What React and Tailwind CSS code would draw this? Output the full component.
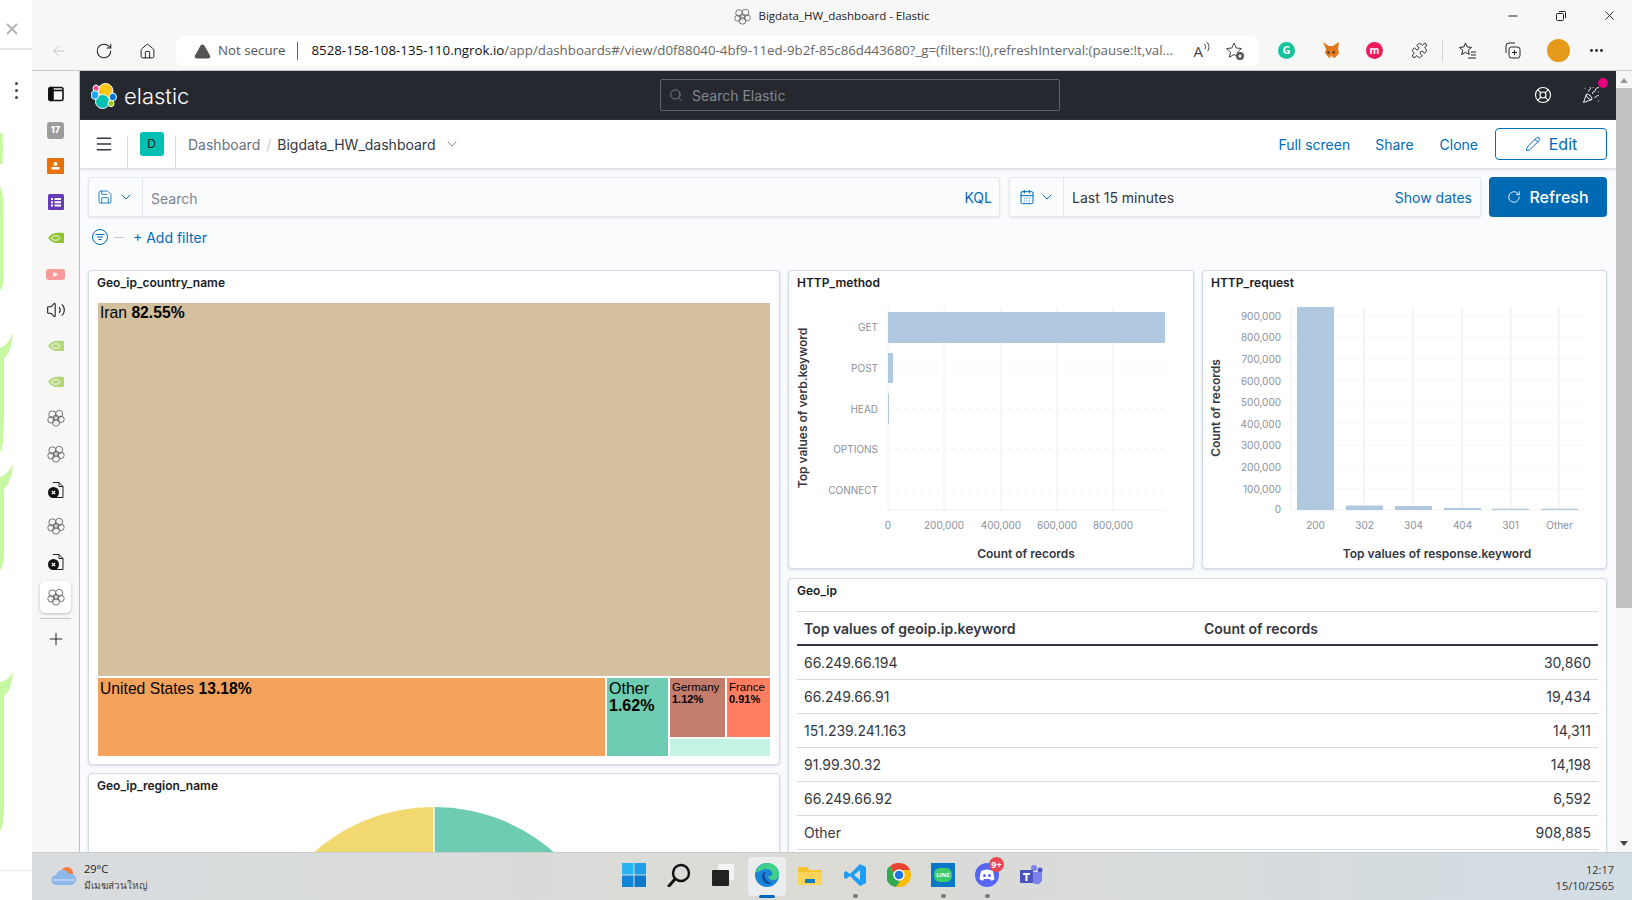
import React from "react";
import {
  ArrowLeft,
  RotateCw,
  House,
  TriangleAlert,
  Ellipsis,
  Search,
  LifeBuoy,
  PartyPopper,
  Menu,
  ChevronDown,
  Pencil,
  Save,
  CalendarDays,
  Volume2,
  Plus,
  X,
  Minus,
  Puzzle,
} from "lucide-react";

const inter = "font-['Inter',sans-serif]";
const chrome = "font-['Open_Sans','Noto_Sans',sans-serif]";

// outline of the elastic cluster, used for tab favicons
function ClusterIcon({ size = 18, stroke = "#666" }) {
  return (
    <svg width={size} height={size} viewBox="0 0 20 20" fill="none" stroke={stroke} strokeWidth="1">
      <circle cx="6" cy="6" r="4" />
      <circle cx="13.5" cy="5.5" r="4" />
      <circle cx="10" cy="10" r="3.2" />
      <circle cx="4.5" cy="12" r="3.6" />
      <circle cx="15.5" cy="11.5" r="3.6" />
      <circle cx="10" cy="15" r="4" />
    </svg>
  );
}

function ElasticLogo() {
  return (
    <svg width="26" height="26" viewBox="0 0 26 26">
      <circle cx="14.5" cy="8" r="7.5" fill="#FEC514" stroke="#fff" strokeWidth="1" />
      <circle cx="11.5" cy="18.5" r="7" fill="#00BFB3" stroke="#fff" strokeWidth="1" />
      <ellipse cx="5" cy="5.5" rx="3" ry="3.5" fill="#F04E98" stroke="#fff" strokeWidth="1" />
      <ellipse cx="4" cy="12" rx="3.8" ry="4.2" fill="#1BA9F5" stroke="#fff" strokeWidth="1" />
      <ellipse cx="21.8" cy="14" rx="3.6" ry="4" fill="#0077CC" stroke="#fff" strokeWidth="1" />
      <ellipse cx="20" cy="20.5" rx="3" ry="3.2" fill="#93C90E" stroke="#fff" strokeWidth="1" />
    </svg>
  );
}

function NvidiaIcon({ faded }) {
  return (
    <svg width="16" height="12" viewBox="0 0 16 12" className={faded ? "opacity-50" : "opacity-80"}>
      <path d="M0 6 C3 1 8 0 16 1 V11 H7 C4 10 2 8 0 6Z" fill="#76B900" />
      <path d="M3 6 C6 3 10 3 12 6 C10 9 6 9 3 6Z" fill="none" stroke="#fff" strokeWidth="1" />
    </svg>
  );
}

function FileXIcon() {
  return (
    <svg width="18" height="18" viewBox="0 0 18 18" fill="none">
      <path d="M6 1.500h6l4 4v11H6" stroke="#222" strokeWidth="1" />
      <path d="M12 1.500v4h4" stroke="#222" strokeWidth="1" />
      <circle cx="6.500" cy="11.500" r="5.500" fill="#111" />
      <path d="M4.800 9.800l3.400 3.400M8.200 9.800l-3.400 3.400" stroke="#fff" strokeWidth="1.200" />
    </svg>
  );
}

function LeftStrip() {
  return (
    <div className="relative flex h-full w-[32px] shrink-0 flex-col items-center bg-white">
      <X className="mt-[20px] ml-[3px] h-[18px] w-[18px] self-start text-[#b5b5b5]" strokeWidth={2.5} />
      <div className="mt-[10px] h-[2px] w-full bg-[#e5e5e5]" />
      <div className="mt-[32px] flex flex-col gap-[4px]">
        <div className="h-[3px] w-[3px] rounded-full bg-[#444]" />
        <div className="h-[3px] w-[3px] rounded-full bg-[#444]" />
        <div className="h-[3px] w-[3px] rounded-full bg-[#444]" />
      </div>
      <svg className="absolute left-0 top-0" width="32" height="900" viewBox="0 0 32 900" fill="#c8f8a2">
        <path d="M0 133h2.500c.5 10 .5 22 0 31H0Z" />
        <path d="M0 186c4 8 4 18 3.500 30v60c0 8-1 12-3.500 15Z" />
        <path d="M0 348c6-2 10-8 13-15-1 12-4 22-9 25v50c0 30-1 40-4 44Z" />
        <path d="M0 477c6-2 10-7 13-13-1 12-4 21-9 25v60c0 12-1 18-4 21Z" />
        <path d="M0 682c6-1 10-5 13-10-1 12-4 21-9 24v110c0 14-1 21-4 25Z" />
      </svg>
      <div className="absolute bottom-[29px] left-0 h-px w-full bg-[#e8e8e8]" />
    </div>
  );
}

function TitleBar() {
  return (
    <div className={`relative flex h-[32px] items-center justify-center bg-[#f7f7f7] text-[11.5px] text-[#222] ${chrome}`}>
      <div className="flex items-center gap-[7px]">
        <ClusterIcon size={17} />
        <span>Bigdata_HW_dashboard - Elastic</span>
      </div>
      <div className="absolute right-[15px] top-[8px] flex items-center gap-[35px]">
        <Minus className="h-[14px] w-[14px] text-[#222]" />
        <svg width="12" height="12" viewBox="0 0 12 12" fill="none" stroke="#222">
          <rect x="1.500" y="3.500" width="7" height="7" rx="1" />
          <path d="M4 1.500h5.500a1 1 0 0 1 1 1V8" />
        </svg>
        <X className="h-[15px] w-[15px] text-[#222]" strokeWidth={1.5} />
      </div>
    </div>
  );
}

function Toolbar() {
  return (
    <div className="flex h-[39px] items-start border-b border-[#c8c8c8] bg-[#f7f7f7] pt-[4px]">
      <div className="flex h-[30px] w-[144px] shrink-0 items-center">
        <ArrowLeft className="ml-[18px] h-[18px] w-[18px] text-[#c4c4c4]" strokeWidth={1.25} />
        <RotateCw className="ml-[27px] h-[18px] w-[18px] text-[#222]" strokeWidth={1.4} />
        <House className="ml-[26px] h-[17px] w-[17px] text-[#222]" strokeWidth={1.4} />
      </div>
      <div className={`flex h-[30px] w-[1083px] shrink-0 items-center rounded-lg bg-white text-[13.3px] ${chrome}`}>
        <TriangleAlert className="ml-[18px] h-[17px] w-[17px] fill-[#555] text-[#555]" />
        <span className="ml-[7px] text-[#555]">Not secure</span>
        <div className="ml-[12px] h-[18px] w-px bg-[#666]" />
        <span className="ml-[13px] w-[870px] shrink-0 whitespace-nowrap text-[#666]">
          <span className="text-[#111]">8528-158-108-135-110.ngrok.io</span>
          /app/dashboards#/view/d0f88040-4bf9-11ed-9b2f-85c86d443680?_g=(filters:!(),refreshInterval:(pause:!t,val...
        </span>
        <span className="ml-[12px] text-[15px] text-[#444]">A</span>
        <svg width="8" height="14" viewBox="0 0 8 14" fill="none" stroke="#444" className="mb-[6px]">
          <path d="M1 3c2 1 2 4 1 5M3.500 1c3 2 3 7 1 9" />
        </svg>
        <svg width="20" height="20" viewBox="0 0 20 20" fill="none" stroke="#444" className="ml-[14px]">
          <path d="M9 2l2.200 5 5.300.5-4 3.500 1.200 5.200L9 13.500 4.300 16.200 5.500 11l-4-3.500L6.800 7Z" />
          <circle cx="15" cy="15" r="4" fill="#555" stroke="none" />
          <path d="M13 15h4M15 13v4" stroke="#fff" />
        </svg>
      </div>
      <div className="relative h-[30px] flex-1">
        <div className={`absolute left-[19px] top-[6px] flex h-[17px] w-[17px] items-center justify-center rounded-full bg-[#15c39a] text-[11px] font-bold text-white ${chrome}`}>G</div>
        <svg className="absolute left-[63px] top-[5px]" width="18" height="18" viewBox="0 0 18 18">
          <path d="M1 1l6 4h4l6-4-1 7 1 4-4 5-3-1-3 1-4-5 1-4Z" fill="#e2761b" />
          <path d="M5 10l3 1-2 2ZM13 10l-3 1 2 2Z" fill="#233447" />
          <path d="M7 16l2-2 2 2Z" fill="#d7c1b3" />
        </svg>
        <div className={`absolute left-[107px] top-[6px] flex h-[17px] w-[17px] items-center justify-center rounded-full bg-[#ec1c5c] text-[10px] font-bold text-white ${chrome}`}>m</div>
        <Puzzle className="absolute left-[152px] top-[6px] h-[17px] w-[17px] text-[#222]" strokeWidth={1.3} />
        <div className="absolute left-[183px] top-[4px] h-[22px] w-px bg-[#d5d5d5]" />
        <svg className="absolute left-[199px] top-[5px]" width="19" height="19" viewBox="0 0 19 19" fill="none" stroke="#222">
          <path d="M7.500 2l1.800 4 4.200.4-3.200 2.900 1 4.200-3.800-2.200L3.700 13.500l1-4.200L1.500 6.400 5.700 6Z" />
          <path d="M13 11h5M13 14h5M10 17h8" />
        </svg>
        <svg className="absolute left-[244px] top-[5px]" width="19" height="19" viewBox="0 0 19 19" fill="none" stroke="#222">
          <rect x="6" y="6" width="11" height="11" rx="2.500" />
          <path d="M11.500 9v5M9 11.500h5" />
          <path d="M3 12V5a3 3 0 0 1 3-3h6" />
        </svg>
        <div className="absolute left-[288px] top-[3px] h-[23px] w-[23px] rounded-full bg-[#e59a1c]" />
        <Ellipsis className="absolute left-[329px] top-[6px] h-[17px] w-[17px] text-[#222]" />
      </div>
    </div>
  );
}

const sideIcons = [
  <svg key="a" width="18" height="18" viewBox="0 0 18 18" fill="none" stroke="#111" strokeWidth="1.600">
    <rect x="2" y="2.500" width="14" height="13" rx="2" />
    <path d="M2 5.500h14" />
    <rect x="2" y="2.500" width="4" height="13" rx="1.500" fill="#111" />
  </svg>,
  <div key="b" className={`flex h-[17px] w-[17px] items-center justify-center rounded-[3px] bg-[#9c9c9c] text-[9px] font-extrabold text-white ${inter}`}>17</div>,
  <svg key="c" width="17" height="16" viewBox="0 0 17 16">
    <rect width="17" height="16" rx="1" fill="#e8710a" />
    <circle cx="8.500" cy="6" r="2" fill="#fff" />
    <rect x="4.500" y="9" width="8" height="2.500" fill="#fff" />
  </svg>,
  <svg key="d" width="16" height="16" viewBox="0 0 16 16">
    <rect width="16" height="16" rx="1.500" fill="#673ab7" />
    <path d="M3 4h2v2H3ZM6.500 4H13v2H6.500ZM3 7.200h2v2H3ZM6.500 7.200H13v2H6.500ZM3 10.400h2v2H3ZM6.500 10.400H13v2H6.500Z" fill="#fff" />
  </svg>,
  <NvidiaIcon key="e" />,
  <svg key="f" width="19" height="11" viewBox="0 0 19 11">
    <rect width="19" height="11" rx="3" fill="#fb9a9a" />
    <path d="M7.500 3l4.500 2.500L7.500 8Z" fill="#fff" />
  </svg>,
  <Volume2 key="g" className="h-[20px] w-[20px] text-[#111]" strokeWidth={1.25} />,
  <NvidiaIcon key="h" faded />,
  <NvidiaIcon key="i" faded />,
  <ClusterIcon key="j" />,
  <ClusterIcon key="k" />,
  <FileXIcon key="l" />,
  <ClusterIcon key="m" />,
  <FileXIcon key="n" />,
];

function Sidebar() {
  return (
    <div className="flex w-[48px] shrink-0 flex-col items-center border-r border-[#bfbfbf] bg-[#f7f7f7] pt-[5px]">
      {sideIcons.map((icon, i) => (
        <div key={i} className="flex h-[36px] w-full shrink-0 items-center justify-center">
          {icon}
        </div>
      ))}
      <div className="mt-[1px] flex h-[32px] w-[31px] items-center justify-center rounded-[5px] bg-white shadow-[0_1px_3px_rgba(0,0,0,0.25)]">
        <ClusterIcon />
      </div>
      <div className="mt-[5px] h-px w-[31px] bg-[#c8c8c8]" />
      <Plus className="mt-[10px] h-[20px] w-[20px] text-[#111]" strokeWidth={1.1} />
    </div>
  );
}

function Panel({ title, className, children }) {
  return (
    <div className={`flex shrink-0 flex-col overflow-hidden rounded-[4px] border border-[#d3dae6] bg-white shadow-[0_1px_3px_rgba(152,162,179,0.35)] ${className}`}>
      <div className={`h-[28px] shrink-0 pl-[8px] pt-[3px] text-[12px] font-semibold leading-[18px] text-[#1a1c21] ${inter}`}>{title}</div>
      {children}
    </div>
  );
}

function Treemap() {
  const sans = "font-['Liberation_Sans',sans-serif] text-black";
  return (
    <div className={`mx-[9px] flex h-[453px] flex-col gap-[2px] ${sans}`}>
      <div className="h-[373px] bg-[#d4bf9f] pl-[2px] text-[15.7px] leading-[20px]">
        Iran <b>82.55%</b>
      </div>
      <div className="flex h-[78px] gap-[2px]">
        <div className="w-[507px] bg-[#f5a35c] pl-[2px] pt-[1px] text-[15.7px] leading-[20px]">
          United States <b>13.18%</b>
        </div>
        <div className="w-[61px] bg-[#6dccb1] pl-[2px] pt-[2px] text-[16px] leading-[17px]">
          Other
          <br />
          <b>1.62%</b>
        </div>
        <div className="flex flex-1 flex-col gap-[2px]">
          <div className="flex h-[59px] gap-[2px] text-[11.5px] leading-[12px]">
            <div className="w-[55px] bg-[#c47c6c] pl-[2px] pt-[3px]">
              Germany
              <br />
              <b className="text-[11px]">1.12%</b>
            </div>
            <div className="flex-1 bg-[#ff7e62] pl-[2px] pt-[3px]">
              France
              <br />
              <span className="text-[11px] font-bold">0.91%</span>
            </div>
          </div>
          <div className="flex-1 bg-[#c4f2e4]" />
        </div>
      </div>
    </div>
  );
}

const tick = "fill-[#8a919c] text-[10px]";
const axisTitle = "fill-[#343741] text-[12px] font-semibold";

function MethodChart() {
  const cats = [
    ["GET", 327],
    ["POST", 368],
    ["HEAD", 409],
    ["OPTIONS", 449],
    ["CONNECT", 490],
  ];
  return (
    <svg width="403" height="268" viewBox="789 299 403 268" className={inter}>
      {[888, 944, 1001, 1057, 1113].map((x) => (
        <line key={x} x1={x} x2={x} y1="307" y2="510" stroke="#eef0f3" strokeWidth="1" />
      ))}
      {cats.slice(1).map(([, y]) => (
        <line key={y} x1="888" x2="1165" y1={y} y2={y} stroke="#eef0f3" strokeWidth="1" strokeDasharray="4 4" />
      ))}
      <line x1="888" x2="1165" y1="510" y2="510" stroke="#eef0f3" strokeWidth="1" />
      <rect x="888" y="312" width="277" height="31" fill="#b0c9e0" />
      <rect x="888" y="353" width="5" height="30" fill="#b0c9e0" />
      <rect x="888" y="393" width="1" height="31" fill="#b0c9e0" />
      {cats.map(([t, y]) => (
        <text key={t} x="878" y={y + 4} textAnchor="end" className={tick}>{t}</text>
      ))}
      {[[888, "0"], [944, "200,000"], [1001, "400,000"], [1057, "600,000"], [1113, "800,000"]].map(([x, t]) => (
        <text key={t} x={x} y="529" textAnchor="middle" className={tick}>{t}</text>
      ))}
      <text x="1026" y="558" textAnchor="middle" className={axisTitle}>Count of records</text>
      <text transform="translate(807 408) rotate(-90)" textAnchor="middle" className={axisTitle}>Top values of verb.keyword</text>
    </svg>
  );
}

function RequestChart() {
  const bars = [
    ["200", 1297, 307],
    ["302", 1346, 505.5],
    ["304", 1395, 506],
    ["404", 1444, 508],
    ["301", 1492, 508.7],
    ["Other", 1541, 508.7],
  ];
  const rows = ["900,000", "800,000", "700,000", "600,000", "500,000", "400,000", "300,000", "200,000", "100,000"];
  return (
    <svg width="403" height="268" viewBox="1203 299 403 268" className={inter}>
      {rows.map((t, i) => (
        <line key={t} x1="1291" x2="1583" y1={315.7 + i * 21.6} y2={315.7 + i * 21.6} stroke="#eef0f3" strokeDasharray="4 4" />
      ))}
      {[1364, 1413, 1462, 1511, 1559].map((x) => (
        <line key={x} x1={x} x2={x} y1="307" y2="510" stroke="#eef0f3" strokeWidth="1.500" />
      ))}
      <line x1="1291" x2="1291" y1="307" y2="510" stroke="#eef0f3" />
      <line x1="1291" x2="1583" y1="510" y2="510" stroke="#eef0f3" />
      {bars.map(([t, x, y]) => (
        <rect key={t} x={x} y={y} width="37" height={510 - y} fill="#b0c9e0" />
      ))}
      {rows.map((t, i) => (
        <text key={t} x="1281" y={319.7 + i * 21.6} textAnchor="end" className={tick}>{t}</text>
      ))}
      <text x="1281" y="513" textAnchor="end" className={tick}>0</text>
      {bars.map(([t, x]) => (
        <text key={t} x={x + 18.5} y="529" textAnchor="middle" className={tick}>{t}</text>
      ))}
      <text x="1437" y="558" textAnchor="middle" className={axisTitle}>Top values of response.keyword</text>
      <text transform="translate(1220 408) rotate(-90)" textAnchor="middle" className={axisTitle}>Count of records</text>
    </svg>
  );
}

const ipRows = [
  ["66.249.66.194", "30,860"],
  ["66.249.66.91", "19,434"],
  ["151.239.241.163", "14,311"],
  ["91.99.30.32", "14,198"],
  ["66.249.66.92", "6,592"],
  ["Other", "908,885"],
];

function GeoTable() {
  return (
    <div className={`ml-[8px] mr-[8px] border-t border-[#d3dae6] text-[14px] ${inter}`}>
      <div className="flex h-[34px] items-center border-b-2 border-[#343741] text-[14px] font-semibold text-[#343741]">
        <div className="w-[407px] pl-[7px]">Top values of geoip.ip.keyword</div>
        <div>Count of records</div>
      </div>
      {ipRows.map(([ip, count]) => (
        <div key={ip} className="flex h-[34px] items-center justify-between border-b border-[#d3dae6] px-[7px] text-[#343741]">
          <span>{ip}</span>
          <span>{count}</span>
        </div>
      ))}
    </div>
  );
}

function Dashboard() {
  return (
    <div className="flex gap-[8px] pl-[8px] pt-[23px]">
      <div className="flex w-[692px] shrink-0 flex-col gap-[8px]">
        <Panel title="Geo_ip_country_name" className="h-[495px]">
          <div className="pt-[4px]">
            <Treemap />
          </div>
        </Panel>
        <Panel title="Geo_ip_region_name" className="h-[300px]">
          <svg width="690" height="270" viewBox="89 802 690 270" className="shrink-0">
            <path d="M434 989 L434 807 A182 182 0 0 0 252 989 Z" fill="#f1d86f" />
            <path d="M434 989 L434 807 A182 182 0 0 1 616 989 Z" fill="#6dccb1" />
            <line x1="434" x2="434" y1="807" y2="989" stroke="#fff" strokeWidth="1.500" />
          </svg>
        </Panel>
      </div>
      <div className="flex w-[819px] shrink-0 flex-col gap-[9px]">
        <div className="flex gap-[8px]">
          <Panel title="HTTP_method" className="h-[299px] w-[406px]">
            <MethodChart />
          </Panel>
          <Panel title="HTTP_request" className="h-[299px] w-[405px]">
            <RequestChart />
          </Panel>
        </div>
        <Panel title="Geo_ip" className="h-[300px]">
          <div className="pt-[4px]">
            <GeoTable />
          </div>
        </Panel>
      </div>
    </div>
  );
}

function KibanaPage() {
  const link = "text-[14px] text-[#006bb8]";
  return (
    <div className={`flex h-full min-w-0 flex-1 flex-col overflow-hidden bg-[#fafbfd] ${inter}`}>
      <div className="relative flex h-[49px] shrink-0 items-center bg-[#25282f]">
        <div className="ml-[11px]">
          <ElasticLogo />
        </div>
        <span className="ml-[7px] text-[22px] font-light leading-none text-white">elastic</span>
        <div className="absolute left-[580px] top-[8px] flex h-[32px] w-[400px] items-center rounded-[2px] border border-[#5f646d] text-[14px] text-[#83888f]">
          <Search className="ml-[8px] h-[14px] w-[14px]" strokeWidth={1.5} />
          <span className="ml-[9px]">Search Elastic</span>
        </div>
        <LifeBuoy className="absolute right-[64px] top-[15px] h-[18px] w-[18px] text-white" strokeWidth={1.5} />
        <PartyPopper className="absolute right-[16px] top-[15px] h-[18px] w-[18px] text-white" strokeWidth={1.25} />
        <div className="absolute right-[8px] top-[7px] h-[10px] w-[10px] rounded-full bg-[#e6007e]" />
      </div>
      <div className="relative z-10 flex h-[48px] shrink-0 items-center bg-white text-[14px] shadow-[0_1px_3px_rgba(152,162,179,0.5)]">
        <div className="flex h-[32px] w-[48px] items-center justify-center self-end border-r border-[#d3dae6] pb-[16px]">
          <Menu className="h-[20px] w-[20px] text-[#343741]" strokeWidth={1.75} />
        </div>
        <div className="flex h-[32px] w-[48px] justify-center self-end border-r border-[#d3dae6]">
          <div className="-mt-[4px] flex h-[24px] w-[24px] items-center justify-center rounded-[3px] bg-[#00bfb3] text-[12px] text-[#1a1c21]">D</div>
        </div>
        <span className="ml-[12px] text-[#69707d]">Dashboard</span>
        <span className="mx-[6px] text-[#c5cbd5]">/</span>
        <span className="text-[#343741]">Bigdata_HW_dashboard</span>
        <ChevronDown className="ml-[9px] h-[16px] w-[16px] text-[#69707d]" strokeWidth={1.25} />
        <div className="ml-auto flex items-center">
          <span className={link}>Full screen</span>
          <span className={`ml-[25px] ${link}`}>Share</span>
          <span className={`ml-[26px] ${link}`}>Clone</span>
          <div className="ml-[17px] mr-[9px] flex h-[32px] w-[112px] items-center justify-center gap-[8px] rounded-[4px] border border-[#0071c2] text-[16px] text-[#006bb8]">
            <Pencil className="h-[16px] w-[16px]" strokeWidth={1.5} />
            Edit
          </div>
        </div>
      </div>
      <div className="mt-[9px] flex h-[40px] shrink-0 gap-[9px] pl-[8px] text-[14px]">
        <div className="flex w-[912px] items-center rounded-[2px] border border-[#e4e8ef] bg-[#fbfcfd] shadow-[0_1px_2px_rgba(152,162,179,0.25)]">
          <div className="flex h-full w-[54px] items-center justify-center gap-[5px] border-r border-[#e4e8ef] text-[#006bb8]">
            <Save className="h-[16px] w-[16px]" strokeWidth={1.25} />
            <ChevronDown className="h-[16px] w-[16px]" strokeWidth={1.5} />
          </div>
          <span className="ml-[8px] pt-[2px] text-[#7b828e]">Search</span>
          <span className="ml-auto mr-[7px] text-[#006bb8]">KQL</span>
        </div>
        <div className="flex w-[472px] items-center rounded-[2px] border border-[#e4e8ef] bg-[#fbfcfd] shadow-[0_1px_2px_rgba(152,162,179,0.25)]">
          <div className="flex h-full w-[54px] items-center justify-center gap-[4px] border-r border-[#e4e8ef] text-[#006bb8]">
            <CalendarDays className="h-[16px] w-[16px]" strokeWidth={1.5} />
            <ChevronDown className="h-[16px] w-[16px]" strokeWidth={1.5} />
          </div>
          <span className="ml-[8px] text-[#343741]">Last 15 minutes</span>
          <span className="ml-auto mr-[8px] text-[#006bb8]">Show dates</span>
        </div>
        <div className="-ml-px flex w-[118px] items-center justify-center gap-[8px] rounded-[4px] bg-[#0069b3] text-[16px] font-medium text-white">
          <RotateCw className="h-[14px] w-[14px]" strokeWidth={1.5} />
          Refresh
        </div>
      </div>
      <div className="mt-[10px] flex h-[20px] shrink-0 items-center pl-[12px] text-[14px] text-[#006bb8]">
        <svg width="16" height="16" viewBox="0 0 16 16" fill="none" stroke="#006bb8">
          <circle cx="8" cy="8" r="7.500" />
          <path d="M3.500 5.500h9M5 8h6M6.500 10.500h3" />
        </svg>
        <div className="ml-[6px] h-px w-[10px] bg-[#c5cbd5]" />
        <span className="ml-[9px]">+ Add filter</span>
      </div>
      <Dashboard />
    </div>
  );
}

function Scrollbar() {
  return (
    <div className="flex h-full w-[16px] shrink-0 flex-col items-center bg-[#f6f6f6]">
      <div className="mt-[7px] h-0 w-0 border-x-[4px] border-b-[5px] border-x-transparent border-b-[#9b9b9b]" />
      <div className="mt-[5px] h-[520px] w-full bg-[#c1c1c1]" />
      <div className="mt-auto mb-[6px] h-0 w-0 border-x-[4px] border-t-[5px] border-x-transparent border-t-[#444]" />
    </div>
  );
}

function TaskIcon({ left, dot, children }) {
  return (
    <div className="absolute top-[9px] flex h-[26px] w-[26px] items-center justify-center" style={{ left }}>
      {children}
      {dot && <div className="absolute -bottom-[10px] h-[4px] w-[5px] rounded-full bg-[#7a7a7a]" />}
    </div>
  );
}

function Taskbar() {
  return (
    <div className={`relative h-[48px] shrink-0 border-t border-[#c9cbcc] bg-gradient-to-r from-[#d8dcdf] via-[#dcdbd6] to-[#d2dde4] text-[#222] ${chrome}`}>
      <svg className="absolute left-[19px] top-[12px]" width="26" height="22" viewBox="0 0 26 22">
        <circle cx="16" cy="8" r="6" fill="#f47b3c" />
        <path d="M6 20a5 5 0 0 1-1-10 7 7 0 0 1 13-1 5.500 5.500 0 0 1 3 11Z" fill="#8fb8ea" />
        <path d="M2 15h22" stroke="#d6e6fa" strokeWidth="1" />
      </svg>
      <div className="absolute left-[52px] top-[8px] text-[11px] leading-[16px]">
        29°C
        <div className="text-[10px] leading-[16px] text-[#444]">มีเมฆส่วนใหญ่</div>
      </div>
      <TaskIcon left="589px">
        <svg width="24" height="24" viewBox="0 0 24 24">
          <path d="M0 0h11.500v11.500H0Z" fill="#2bb4f2" />
          <path d="M12.500 0H24v11.500H12.500Z" fill="#1f9fe8" />
          <path d="M0 12.500h11.500V24H0Z" fill="#1186d8" />
          <path d="M12.500 12.500H24V24H12.500Z" fill="#0c78cc" />
        </svg>
      </TaskIcon>
      <TaskIcon left="634px">
        <svg width="24" height="24" viewBox="0 0 24 24" fill="none" stroke="#111" strokeWidth="2.400">
          <circle cx="14" cy="10" r="8" />
          <path d="M8 16l-6 7" strokeLinecap="round" strokeWidth="3" />
        </svg>
      </TaskIcon>
      <TaskIcon left="678px">
        <svg width="24" height="24" viewBox="0 0 24 24">
          <rect x="7" y="1" width="16" height="16" rx="1" fill="#f4f4f4" />
          <rect x="1" y="7" width="17" height="16" rx="1" fill="#222" />
        </svg>
      </TaskIcon>
      <div className="absolute left-[716px] top-[4px] h-[39px] w-[38px] rounded-[4px] bg-[#ecedee]" />
      <div className="absolute bottom-[2px] left-[727px] h-[3px] w-[16px] rounded-full bg-[#0067c0]" />
      <TaskIcon left="722px">
        <svg width="26" height="26" viewBox="0 0 26 26">
          <circle cx="13" cy="13" r="12" fill="#1b84d8" />
          <path d="M2 10C4 3 10 1 14 1c6 0 11 5 11 11 0 4-3 6-6 6s-5-2-5-4c3 1 5-1 4-4-2-3-6-4-10-2-3 1-5 3-6 2Z" fill="#3fd08a" />
          <path d="M8 14c0-3 2-4 4-4-3 3-1 10 6 11-6 3-10-2-10-7Z" fill="#0c4f9a" />
        </svg>
      </TaskIcon>
      <TaskIcon left="765px">
        <svg width="26" height="24" viewBox="0 0 26 24">
          <path d="M1 4h9l3 3h12v15H1Z" fill="#f7c331" />
          <rect x="1" y="9" width="24" height="13" fill="#fbd35b" />
          <rect x="8" y="16" width="10" height="4" fill="#0f7dc2" />
        </svg>
      </TaskIcon>
      <TaskIcon left="810px" dot>
        <svg width="24" height="24" viewBox="0 0 24 24">
          <path d="M17 1l6 3v16l-6 3L7 13l-4 3-2-1.500V9.500L3 8l4 3ZM17 7l-6 5 6 5Z" fill="#1f9cf0" />
        </svg>
      </TaskIcon>
      <TaskIcon left="854px">
        <svg width="24" height="24" viewBox="0 0 24 24">
          <circle cx="12" cy="12" r="12" fill="#fbbc04" />
          <path d="M12 0a12 12 0 0 1 11 7H12a5 5 0 0 0-5 3L3 3a12 12 0 0 1 9-3Z" fill="#ea4335" />
          <path d="M3 3l5 10 5 5-4 6A12 12 0 0 1 3 3Z" fill="#34a853" />
          <circle cx="12" cy="12" r="5" fill="#1a73e8" stroke="#fff" strokeWidth="1.500" />
        </svg>
      </TaskIcon>
      <TaskIcon left="898px" dot>
        <div className="flex h-[24px] w-[24px] items-center justify-center bg-[#0a78c8]">
          <div className="flex h-[14px] w-[18px] items-center justify-center rounded-[6px] bg-[#3ecb6a] text-[6px] font-bold text-white">LINE</div>
        </div>
      </TaskIcon>
      <TaskIcon left="942px" dot>
        <svg width="24" height="24" viewBox="0 0 24 24">
          <circle cx="12" cy="12" r="12" fill="#5865f2" />
          <path d="M6 8c4-2 8-2 12 0l1.500 8c-1 1-2.500 1.500-3.500 1.500l-1-1.500h-6l-1 1.500C7 17.500 5.500 17 4.500 16Z" fill="#fff" />
          <circle cx="9.500" cy="12.500" r="1.500" fill="#5865f2" />
          <circle cx="14.500" cy="12.500" r="1.500" fill="#5865f2" />
        </svg>
        <div className="absolute -right-[4px] -top-[5px] flex h-[15px] w-[15px] items-center justify-center rounded-full bg-[#e8484f] text-[9px] font-bold text-white">9+</div>
      </TaskIcon>
      <TaskIcon left="986px">
        <svg width="24" height="24" viewBox="0 0 24 24">
          <circle cx="15" cy="5" r="3" fill="#7b83eb" />
          <circle cx="21" cy="7" r="2.500" fill="#5059c9" />
          <path d="M11 9h12v8a5 5 0 0 1-6 4 6 6 0 0 1-6-6Z" fill="#7b83eb" />
          <rect x="1" y="7" width="13" height="13" rx="1" fill="#4b53bc" />
          <path d="M4 10h7v2H8.500v6h-2v-6H4Z" fill="#fff" />
        </svg>
      </TaskIcon>
      <div className="absolute right-[18px] top-[9px] text-right text-[11px] leading-[16px] text-[#333]">
        12:17
        <br />
        15/10/2565
      </div>
    </div>
  );
}

export default function App() {
  return (
    <div className="flex h-[900px] w-[1632px] overflow-hidden bg-white">
      <LeftStrip />
      <div className="flex h-full min-w-0 flex-1 flex-col">
        <TitleBar />
        <Toolbar />
        <div className="flex h-[781px] shrink-0">
          <Sidebar />
          <KibanaPage />
          <Scrollbar />
        </div>
        <Taskbar />
      </div>
    </div>
  );
}
